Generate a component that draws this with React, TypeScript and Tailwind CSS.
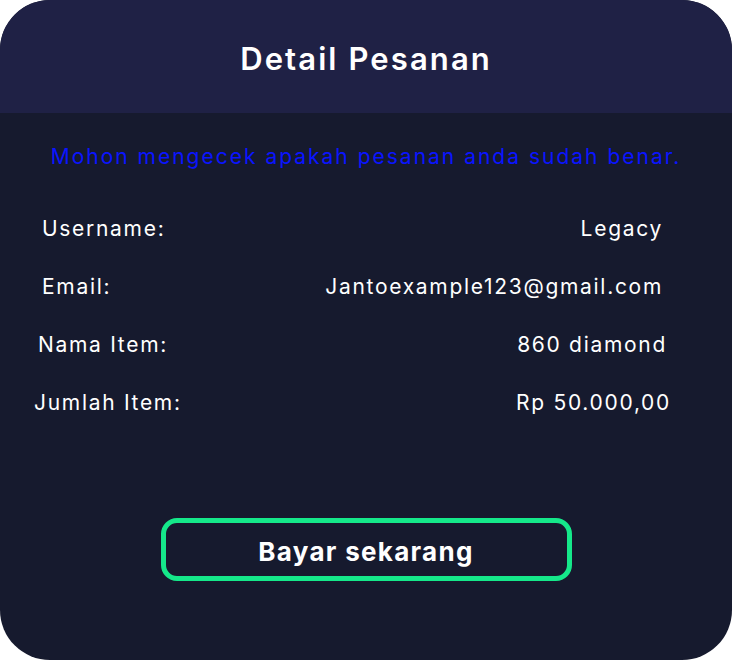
import React from "react";

const rows = [
  { label: "Username:", value: "Legacy", cls: "pl-[42px] pr-[69px]" },
  { label: "Email:", value: "Jantoexample123@gmail.com", cls: "pl-[42px] pr-[69px]" },
  { label: "Nama Item:", value: "860 diamond", cls: "pl-[38px] pr-[65px]" },
  { label: "Jumlah Item:", value: "Rp 50.000,00", cls: "pl-[34px] pr-[61px]" },
];

export default function App() {
  return (
    <div className="w-[732px] h-[660px] bg-white font-['Inter',sans-serif]">
      <div className="w-full h-full rounded-[50px] overflow-hidden bg-[#161a2e] flex flex-col">
        <header className="h-[113px] pt-[6px] bg-[#1f2145] flex items-center justify-center">
          <h1 className="text-[31px] font-semibold text-white tracking-[2.1px]">Detail Pesanan</h1>
        </header>
        <p className="mt-[30px] text-center text-[21px] text-[#0a14ff] leading-[28px] tracking-[2px]">
          Mohon mengecek apakah pesanan anda sudah benar.
        </p>
        <div className="mt-[44px] flex flex-col gap-[30px]">
          {rows.map((r) => (
            <div
              key={r.label}
              className={`flex justify-between text-[21px] leading-[28px] text-white tracking-[1.7px] ${r.cls}`}
            >
              <span>{r.label}</span>
              <span>{r.value}</span>
            </div>
          ))}
        </div>
        <div className="mt-[101px] flex justify-center">
          <button className="w-[411px] h-[63px] pt-[3px] rounded-[16px] border-[5px] border-[#15e88a] text-white text-[26px] font-bold tracking-[1.3px]">
            Bayar sekarang
          </button>
        </div>
      </div>
    </div>
  );
}
